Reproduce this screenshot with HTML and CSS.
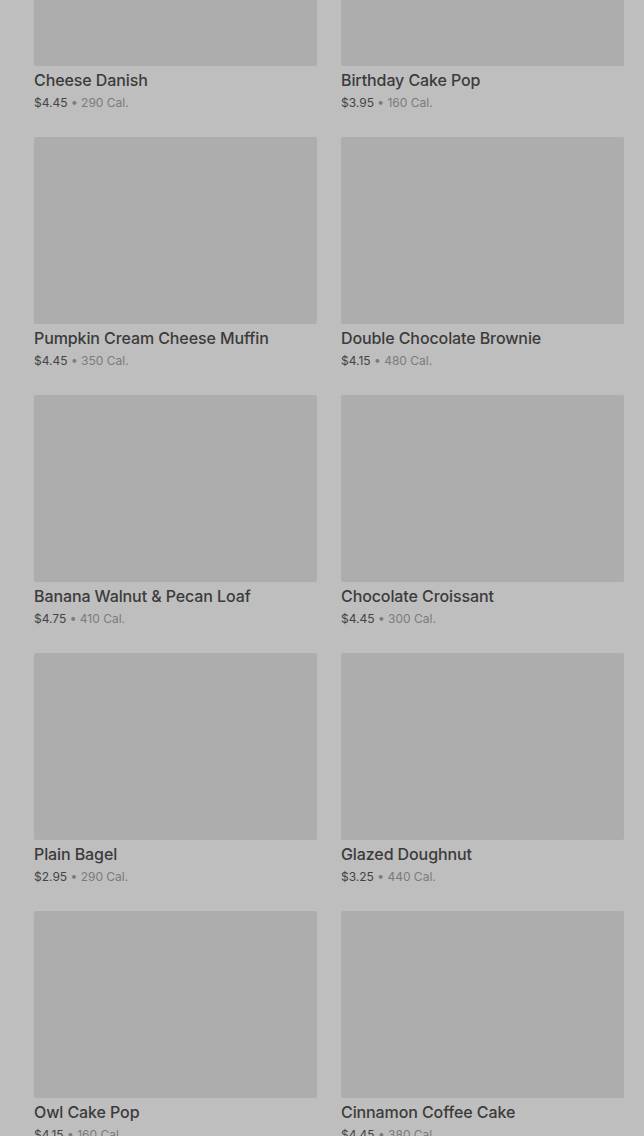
FILE: index.html
```html
<!DOCTYPE html>
<html lang="en">
<head>
  <meta charset="UTF-8" />
  <meta name="viewport" content="width=device-width, initial-scale=1.0"/>
  <title>Bakery</title>
  <link rel="stylesheet" href="styles.css">
</head>
<body>
  <div class="menu-grid">
    <div class="item">
      <div class="item-img"></div>
      <h3>Cheese Danish</h3>
      <p class="meta"><span class="price">$4.45</span> • 290 Cal.</p>
    </div>
    <div class="item">
      <div class="item-img"></div>
      <h3>Birthday Cake Pop</h3>
      <p class="meta"><span class="price">$3.95</span> • 160 Cal.</p>
    </div>
    <div class="item">
      <div class="item-img"></div>
      <h3>Pumpkin Cream Cheese Muffin</h3>
      <p class="meta"><span class="price">$4.45</span> • 350 Cal.</p>
    </div>
    <div class="item">
      <div class="item-img"></div>
      <h3>Double Chocolate Brownie</h3>
      <p class="meta"><span class="price">$4.15</span> • 480 Cal.</p>
    </div>
    <div class="item">
      <div class="item-img"></div>
      <h3>Banana Walnut &amp; Pecan Loaf</h3>
      <p class="meta"><span class="price">$4.75</span> • 410 Cal.</p>
    </div>
    <div class="item">
      <div class="item-img"></div>
      <h3>Chocolate Croissant</h3>
      <p class="meta"><span class="price">$4.45</span> • 300 Cal.</p>
    </div>
    <div class="item">
      <div class="item-img"></div>
      <h3>Plain Bagel</h3>
      <p class="meta"><span class="price">$2.95</span> • 290 Cal.</p>
    </div>
    <div class="item">
      <div class="item-img"></div>
      <h3>Glazed Doughnut</h3>
      <p class="meta"><span class="price">$3.25</span> • 440 Cal.</p>
    </div>
    <div class="item">
      <div class="item-img"></div>
      <h3>Owl Cake Pop</h3>
      <p class="meta"><span class="price">$4.15</span> • 160 Cal.</p>
    </div>
    <div class="item">
      <div class="item-img"></div>
      <h3>Cinnamon Coffee Cake</h3>
      <p class="meta"><span class="price">$4.45</span> • 380 Cal.</p>
    </div>
  </div>
</body>
</html>
```

FILE: styles.css
```css
html, body {
  margin: 0;
  padding: 0;
}
body {
  background: #bebebe;
  font-family: Inter, 'Noto Sans', Arial, sans-serif;
  color: #3a3a3a;
  overflow: hidden;
}
.menu-grid {
  display: grid;
  grid-template-columns: 283px 283px;
  column-gap: 24px;
  row-gap: 25px;
  padding: 0 20px 0 34px;
  margin-top: -121px;
}
.item-img {
  height: 187px;
  background: #adadad;
  border-radius: 2px;
}
.item h3 {
  margin: 4px 0 0;
  font-size: 16px;
  line-height: 20px;
  font-weight: 500;
  letter-spacing: -0.1px;
  color: #3b3b3b;
}
.meta {
  margin: 4px 0 0;
  font-size: 12px;
  line-height: 18px;
  color: #7b7b7b;
}
.meta .price {
  color: #444;
}
```
